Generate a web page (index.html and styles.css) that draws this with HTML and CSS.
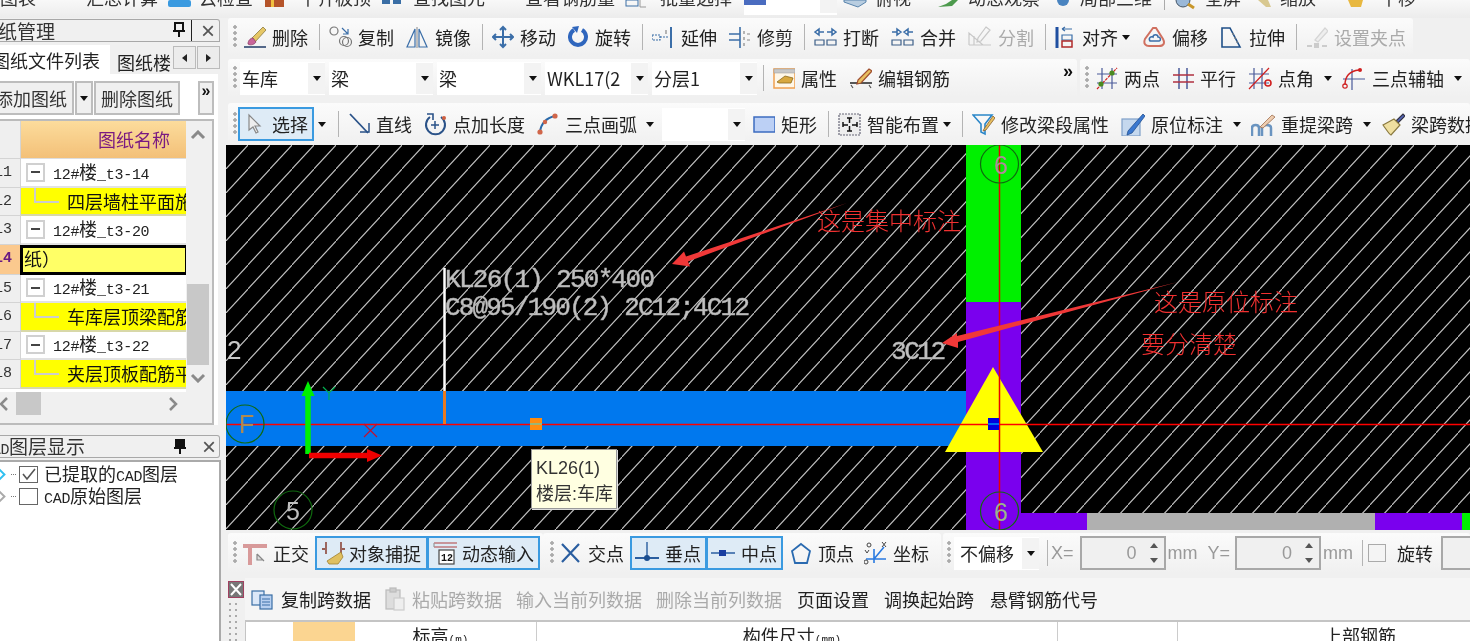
FILE: index.html
```html
<!DOCTYPE html>
<html lang="zh">
<head>
<meta charset="utf-8">
<title>钢筋算量</title>
<link rel="stylesheet" href="styles.css">
</head>
<body>
<div class="app">

<header class="topbar">
  <span class="tt t-a">图表</span>
  <span class="tt t-b">汇总计算</span>
  <svg class="tic t-c" width="24" height="18"><rect x="0" y="0" width="23" height="7" rx="2" fill="#3a9ae0"/></svg>
  <span class="tt t-d">云检查</span>
  <svg class="tic t-e" width="20" height="18"><rect x="0" y="0" width="19" height="7" fill="#b5542a"/><rect x="6" y="0" width="3" height="7" fill="#f0c040"/></svg>
  <span class="tt t-f">平齐板顶</span>
  <svg class="tic t-g" width="20" height="18"><rect x="0" y="0" width="8" height="4" fill="#3a6ea5"/><rect x="11" y="0" width="8" height="4" fill="#3a6ea5"/></svg>
  <span class="tt t-h">查找图元</span>
  <span class="tt t-i">查看钢筋量</span>
  <svg class="tic t-j" width="22" height="18"><rect x="1" y="0" width="12" height="6" fill="none" stroke="#3a6ea5"/><path d="M15 0v7h6" stroke="#999" fill="none"/></svg>
  <span class="tt t-k">批量选择</span>
  <div class="topcombo"><i class="topcombo-fill"></i><i class="topcombo-btn"></i></div>
  <svg class="tic t-l" width="24" height="18"><path d="M1 2l14 5 8-5V0H1z" fill="#b8cde0" stroke="#5a85ad"/></svg>
  <span class="tt t-m">俯视</span>
  <svg class="tic t-n" width="24" height="18"><path d="M2 7l8-3 6-4h6l-6 6z" fill="#4d9a4d"/></svg>
  <span class="tt t-o">动态观察</span>
  <svg class="tic t-p" width="15" height="18"><circle cx="7" cy="0" r="6" fill="#4a84c0"/></svg>
  <span class="tt t-q">局部三维</span>
  <i class="topsep"></i>
  <svg class="tic t-r" width="22" height="18"><circle cx="9" cy="0" r="7" fill="#9ab8d8" stroke="#456"/><path d="M14 4l6 4" stroke="#c8962a" stroke-width="3"/></svg>
  <span class="tt t-s">全屏</span>
  <svg class="tic t-t" width="18" height="18"><path d="M4 0h10l3 7-5 0z" fill="#d8c890"/></svg>
  <span class="tt t-u">缩放</span>
  <svg class="tic t-v" width="20" height="18"><path d="M2 0h15l-2 7H5z" fill="#e8b840"/></svg>
  <span class="tt t-w">平移</span>
</header>

<div class="workspace">

<aside class="side">
  <div class="dock-title">
    <span class="dock-text clip-a">图纸管理</span>
    <span class="pin pin-raised"><svg width="14" height="16" class="pin-ic"><path d="M3 1h8v8H3zM1 9h12M7 9v6" fill="none" stroke="#111" stroke-width="2"/></svg></span>
    <span class="close-x">×</span>
  </div>
  <div class="tabs">
    <span class="tab tab-on"><span class="clip-b">图纸文件列表</span></span>
    <span class="tab tab-off">图纸楼</span>
    <span class="tab-arrow"><i class="tri-l"></i></span>
    <span class="tab-arrow"><i class="tri-r"></i></span>
  </div>
  <div class="sheet">
    <div class="sheet-tools">
      <span class="btn btn-add"><span class="clip-c">添加图纸</span></span>
      <span class="btn btn-drop"><i class="caret"></i></span>
      <span class="btn btn-del">删除图纸</span>
      <span class="btn btn-more">»</span>
    </div>
    <div class="sheet-table">
      <div class="tbl-main">
        <div class="rows">
          <div class="tr tr-head"><span class="gut"></span><span class="name-h">图纸名称</span></div>
          <div class="tr"><span class="gut">11</span><span class="cell"><i class="minus"></i><span class="m">12#<b class="cjk">楼</b>_t3-14</span></span></div>
          <div class="tr"><span class="gut">12</span><span class="cell cell-y"><i class="conn"></i>四层墙柱平面施工图</span></div>
          <div class="tr"><span class="gut">13</span><span class="cell"><i class="minus"></i><span class="m">12#<b class="cjk">楼</b>_t3-20</span></span></div>
          <div class="tr tr-active"><span class="gut gut-on">14</span><span class="cell cell-edit">纸）</span></div>
          <div class="tr"><span class="gut">15</span><span class="cell"><i class="minus"></i><span class="m">12#<b class="cjk">楼</b>_t3-21</span></span></div>
          <div class="tr"><span class="gut">16</span><span class="cell cell-y"><i class="conn"></i>车库层顶梁配筋图</span></div>
          <div class="tr"><span class="gut">17</span><span class="cell"><i class="minus"></i><span class="m">12#<b class="cjk">楼</b>_t3-22</span></span></div>
          <div class="tr"><span class="gut">18</span><span class="cell cell-y"><i class="conn"></i>夹层顶板配筋平面图</span></div>
        </div>
        <div class="vbar">
          <svg width="16" height="10" class="chev-up"><path d="M2 8l6-6 6 6" fill="none" stroke="#8a8a8a" stroke-width="3"/></svg>
          <i class="vthumb"></i>
          <svg width="16" height="10" class="chev-dn"><path d="M2 2l6 6 6-6" fill="none" stroke="#8a8a8a" stroke-width="3"/></svg>
        </div>
      </div>
      <div class="hbar">
        <svg width="8" height="14"><path d="M7 1L1 7l6 6" fill="none" stroke="#8a8a8a" stroke-width="2.5"/></svg>
        <i class="hthumb"></i>
        <svg width="10" height="14" class="chev-r"><path d="M2 1l6 6-6 6" fill="none" stroke="#8a8a8a" stroke-width="2.5"/></svg>
      </div>
    </div>
  </div>

  <div class="dock-title dock-two">
    <span class="dock-text clip-d"><span class="m">CAD</span>图层显示</span>
    <span class="pin"><svg width="14" height="16" class="pin-ic"><path d="M3 1h8v8H3zM1 9h12M7 9v6" fill="#111" stroke="#111" stroke-width="2"/></svg></span>
    <span class="close-x">×</span>
  </div>
  <div class="layers">
    <div class="layer"><i class="dia dia-c"></i><i class="dots"></i><span class="chk"><svg width="15" height="13"><path d="M2 6l4 5 8-10" fill="none" stroke="#555" stroke-width="1.6"/></svg></span><span class="lay-t">已提取的<span class="m">CAD</span>图层</span></div>
    <div class="layer"><i class="dia dia-g"></i><i class="dots"></i><span class="chk"></span><span class="lay-t"><span class="m">CAD</span>原始图层</span></div>
  </div>
</aside>

<main class="main">
  <div class="strip strip-1">
    <i class="grip g1"></i>
    <span class="it"><svg class="ic" width="23" height="24"><path d="M1 22h22" stroke="#1f3a66" stroke-width="1.5"/><path d="M9 13L20 2l3 3-11 12z" fill="#e6c766" stroke="#8a7a40" stroke-width=".8"/><path d="M5 19c0-4 3-6 5-6l3 4c-1 2-5 4-8 2z" fill="#c9659a" stroke="#8a3f68" stroke-width=".8"/></svg>删除</span>
    <i class="sep"></i>
    <span class="it"><svg class="ic" width="23" height="24"><circle cx="5" cy="6" r="4" stroke="#777"/><circle cx="15" cy="16" r="4.5" stroke="#777"/><circle cx="18" cy="17" r="4.5" stroke="#777"/><path d="M13 3l6 6m0-5v5h-5" stroke="#3b6ea8"/></svg>复制</span>
    <span class="it"><svg class="ic" width="23" height="24"><path d="M9 4L1 22h8zM13 4l8 18h-8z"/><path d="M11 2v21" stroke="#999"/></svg>镜像</span>
    <i class="sep"></i>
    <span class="it"><svg class="ic" width="22" height="24"><path d="M11 2v20M1 12h20M8 5l3-3 3 3M8 19l3 3 3-3M4 9l-3 3 3 3M18 9l3 3-3 3" stroke-width="2"/></svg>移动</span>
    <span class="it"><svg class="ic" width="21" height="24"><path d="M6 5a8 8 0 1 0 8 0" stroke="#2f66bd" stroke-width="4"/><path d="M11 1l-7 1 5 6z" fill="#2f66bd" stroke="none"/></svg>旋转</span>
    <i class="sep"></i>
    <span class="it"><svg class="ic" width="23" height="24"><path d="M0 10h8v5H0zM8 12h8" stroke-dasharray="2 1"/><path d="M19 2v21" stroke-width="2"/><path d="M14 5v4" stroke="#888"/></svg>延伸</span>
    <span class="it"><svg class="ic" width="22" height="24"><path d="M0 9h11M0 15h11M11 2v21" stroke-width="1.6"/><path d="M15 6v3M15 12v3M15 18v3M18 9h3M18 15h3" stroke="#888"/></svg>修剪</span>
    <i class="sep"></i>
    <span class="it"><svg class="ic" width="23" height="24"><path d="M1 7l4-3v6zM5 7h5M22 7l-4-3v6zM18 7h-5" stroke-width="1.5"/><path d="M1 15h9v5H1zM13 15h9v5h-9z" stroke="#3d5f88"/></svg>打断</span>
    <span class="it"><svg class="ic" width="23" height="24"><path d="M10 7L6 4v6zM6 7H1M13 7l4-3v6zM17 7h5" stroke-width="1.5"/><path d="M1 15h9v5H1zM13 15h9v5h-9z" stroke="#3d5f88"/></svg>合并</span>
    <span class="it it-off"><svg class="ic" width="24" height="24"><path d="M1 20h22M1 20V8l14 12M6 20V11M18 2l4 3-9 11-4 1 1-4z" stroke="#c8c8c8"/></svg>分割</span>
    <i class="sep"></i>
    <span class="it it-c"><svg class="ic" width="21" height="24"><path d="M2 2v21" stroke="#1f4fa0" stroke-width="3"/><path d="M7 4h10M7 4l3-2M7 4l3 2" stroke="#3b6ea8"/><path d="M7 10h10v5H7z" stroke="#3b6ea8"/><path d="M7 16h10v6H7z" stroke="#b02a2a" stroke-width="1.5"/></svg>对齐<i class="caret caret-t"></i></span>
    <span class="it"><svg class="ic" width="23" height="24"><path d="M10 3L2 14c-2 5 1 7 4 7h10c5 0 6-3 4-7L13 3z" stroke="#d07060" stroke-width="2"/><path d="M7 16c-2-3 1-5 3-4 0-3 5-3 5 0 3 0 3 4 1 4z" stroke="#3b6ea8" stroke-width="1.5"/></svg>偏移</span>
    <span class="it"><svg class="ic" width="23" height="24"><path d="M2 3h8l10 19H2z" stroke="#1f4f88" stroke-width="1.6"/><path d="M13 8v2M15 12v2M17 16v2" stroke="#888"/></svg>拉伸</span>
    <i class="sep"></i>
    <span class="it it-off it-z"><svg class="ic" width="22" height="24"><path d="M1 21h5M16 21h5" stroke="#ccc" stroke-width="2"/><rect x="8" y="18" width="5" height="5" fill="#ccc" stroke="none"/><path d="M9 15L19 3l3 3-10 11z" stroke="#d5d5d5" fill="#eee"/></svg>设置夹点</span>
  </div>

  <div class="row-2">
    <div class="strip strip-2a">
      <i class="grip g2"></i>
      <span class="combo w85">车库<i class="combo-btn"><i class="caret"></i></i></span>
      <span class="combo w104">梁<i class="combo-btn"><i class="caret"></i></i></span>
      <span class="combo w104">梁<i class="combo-btn"><i class="caret"></i></i></span>
      <span class="combo w103">WKL17(2<i class="combo-btn combo-btn-s"><i class="caret"></i></i></span>
      <span class="combo w105">分层1<i class="combo-btn"><i class="caret"></i></i></span>
      <i class="sep sep-b"></i>
      <span class="it"><svg class="ic" width="22" height="24"><rect x="1" y="3" width="21" height="19" fill="#fff7e8" stroke="#f0a050" stroke-width="1.5"/><rect x="1" y="3" width="21" height="4" fill="#c8c8c8" stroke="#999" stroke-width=".5"/><path d="M4 16l8-6 8 2-2 5H6z" fill="#d8a840" stroke="#8a6a20" stroke-width=".8"/></svg>属性</span>
      <span class="it"><svg class="ic" width="23" height="24"><path d="M1 17h22" stroke="#222" stroke-width="1.5"/><path d="M2 19l2 3M20 19l2 3" stroke="#555"/><path d="M9 14L20 3l3 2-11 12-4 1z" fill="#e8c060" stroke="#a05030"/></svg>编辑钢筋</span>
      <span class="more">»</span>
    </div>
    <div class="strip strip-2b">
      <i class="grip g3"></i>
      <span class="it"><svg class="ic" width="22" height="24"><path d="M6 2v21M16 2v21M1 8h20M1 17h20" stroke="#4a5a99"/><path d="M1 23L21 2" stroke="#d02020" stroke-dasharray="3 1"/><circle cx="5" cy="18" r="2.6" fill="#4a8a20" stroke="none"/><circle cx="16" cy="7" r="2.6" fill="#4a8a20" stroke="none"/></svg>两点</span>
      <span class="it"><svg class="ic" width="22" height="24"><path d="M7 2v21M15 2v21" stroke="#4a5a99" stroke-width="1.5"/><path d="M1 9h21M1 16h21" stroke="#b03040" stroke-width="1.5"/></svg>平行</span>
      <span class="it it-c2"><svg class="ic" width="24" height="24"><path d="M6 2v21M14 2v21M1 8h20M1 17h20" stroke="#4a5a99"/><path d="M1 23L21 2" stroke="#d02020"/><circle cx="20" cy="17" r="3" stroke="#d02020" stroke-width="1.6"/></svg>点角<i class="caret"></i></span>
      <span class="it it-c2"><svg class="ic" width="24" height="24"><path d="M10 3v21M1 13h22" stroke="#4a5a99"/><path d="M3 19C3 10 8 5 17 4" stroke="#d02020" stroke-width="1.4"/><circle cx="3" cy="20" r="2.2" stroke="#d02020"/><circle cx="18" cy="4" r="2" fill="#d02020" stroke="none"/></svg>三点辅轴<i class="caret"></i></span>
    </div>
  </div>

  <div class="strip strip-3">
    <i class="grip g4"></i>
    <span class="tog tog-sel"><svg class="ic" width="16" height="24"><path d="M2 3v15l4-3 3 6 2-1-3-6h5z" fill="#eee" stroke="#888"/></svg>选择</span>
    <i class="caret caret-a"></i>
    <i class="sep sep-c"></i>
    <span class="it"><svg class="ic" width="22" height="24"><path d="M2 2l18 19" stroke="#2a5288" stroke-width="1.8"/><path d="M12 20h9v-9" stroke="#2a5288" stroke-width="1.5"/></svg>直线</span>
    <span class="it"><svg class="ic" width="23" height="24"><path d="M6 5a9.5 9.5 0 1 0 11 0" stroke="#2a5288" stroke-width="2"/><path d="M11 9v8M7 13h8" stroke="#2a5288" stroke-width="1.5"/><path d="M3 2h6v6" stroke="#2a5288" stroke-width="1.6"/><circle cx="20" cy="6" r="2" fill="#d06040" stroke="none"/></svg>点加长度</span>
    <span class="it it-c3"><svg class="ic" width="22" height="24"><path d="M3 20C4 12 9 6 18 4" stroke="#2a6aaa" stroke-width="2"/><circle cx="3" cy="20" r="2.6" fill="#d0664a" stroke="none"/><circle cx="8" cy="10" r="2.2" fill="#d0664a" stroke="none"/><circle cx="18" cy="4" r="2.6" fill="#d0664a" stroke="none"/></svg>三点画弧<i class="caret"></i></span>
    <span class="combo w83"><i class="combo-btn"><i class="caret"></i></i></span>
    <span class="it"><svg class="ic" width="22" height="24"><rect x="1" y="5" width="21" height="15" fill="#bcd0f5" stroke="#3d6cc0" stroke-width="1.5"/></svg>矩形</span>
    <i class="sep"></i>
    <span class="it it-t"><svg class="ic" width="23" height="24"><rect x="1" y="2" width="21" height="21" fill="#eee" stroke="#667" stroke-dasharray="2 1"/><path d="M11.500 6v5M9 6h5M11.500 14v5M9 19h5M5 13h5M5 10v5M14 13h5M19 10v5" stroke="#111" stroke-width="1.5"/></svg>智能布置<i class="caret"></i></span>
    <i class="sep"></i>
    <span class="it"><svg class="ic" width="23" height="24"><path d="M1 3h19l-7 9v10l-4-2v-8z" stroke="#2a86c8" stroke-width="1.6"/><path d="M12 17l9-13 2 2-9 12-3 1z" fill="#e8c060" stroke="#886030" stroke-width=".8"/></svg>修改梁段属性</span>
    <span class="it it-c4"><svg class="ic" width="24" height="24"><rect x="1" y="7" width="18" height="17" fill="#c5d8ee" stroke="#7fa0c8"/><path d="M7 19L22 2l2 2-13 17-5 2z" fill="#3a78d0" stroke="#25508f" stroke-width=".8"/></svg>原位标注<i class="caret"></i></span>
    <span class="it it-c4"><svg class="ic" width="24" height="24"><path d="M1 24v-8c0-4 7-4 7 0v8M11 24v-8c0-4 9-4 9 0v8" stroke="#6a94c0" stroke-width="2.5"/><path d="M9 15L21 3l3 2-12 11z" fill="#eecdb0" stroke="#a07050" stroke-width=".8"/></svg>重提梁跨<i class="caret"></i></span>
    <span class="it"><svg class="ic" width="24" height="24"><path d="M15 9L22 2l2 2-7 7z" fill="#5566bb" stroke="#334"/><path d="M2 13l11-6 6 6-9 10c-2-1-5-6-8-10z" fill="#efdfa0" stroke="#8a7a40"/></svg>梁跨数据</span>
  </div>

  <div class="canvas">
    <svg class="draw" viewBox="226 145 1244 385" width="1244" height="385">
      <defs>
        <pattern id="hatch" patternUnits="userSpaceOnUse" x="226" y="145" width="22" height="24">
          <path d="M-2 26L24 -2" stroke="#c4c4c4" stroke-width="1.2" fill="none"/>
        </pattern>
      </defs>
      <rect x="226" y="145" width="1244" height="385" fill="#000"/>
      <rect x="226" y="145" width="1244" height="385" fill="url(#hatch)"/>
      <rect x="226" y="391" width="740" height="55" fill="#0078ee"/>
      <rect x="966" y="145" width="55" height="157" fill="#00f000"/>
      <rect x="966" y="302" width="55" height="228" fill="#7a00ee"/>
      <rect x="1021" y="513" width="66" height="17" fill="#7a00ee"/>
      <rect x="1087" y="513" width="288" height="17" fill="#b0b0b0"/>
      <rect x="1375" y="513" width="87" height="17" fill="#7a00ee"/>
      <rect x="1462" y="513" width="8" height="17" fill="#00f000"/>
      <path d="M993 367L1043 452H945z" fill="#ffff00"/>
      <path d="M226 424.500H1470" stroke="#ff0000" stroke-width="1.5"/>
      <path d="M999.500 145V530" stroke="#e80000" stroke-width="1.5"/>
      <rect x="988" y="418" width="11" height="12" fill="#0000e0"/>
      <path d="M988 424h11" stroke="#00e0ff"/>
      <g fill="none" stroke="#0f6a0f" stroke-width="1.2">
        <circle cx="999.500" cy="164" r="19"/>
        <circle cx="999.500" cy="511" r="19"/>
        <circle cx="245" cy="424" r="19"/>
        <circle cx="293" cy="510" r="19"/>
      </g>
      <text class="cad" x="994" y="174" font-size="25" fill="#b08a9a">6</text>
      <text class="cad" x="994" y="521" font-size="25" fill="#9ab88a">6</text>
      <text class="cad" x="239" y="433" font-size="25" fill="#b08a50">F</text>
      <text class="cad" x="286" y="520" font-size="25" fill="#c0c0c0">5</text>
      <text class="cad" x="227" y="359" font-size="26" fill="#c8c8c8">2</text>
      <text class="cad-m" x="445" y="287" font-size="26" textLength="210" lengthAdjust="spacing">KL26(1) 250*400</text>
      <text class="cad-m" x="445" y="315" font-size="26" textLength="305" lengthAdjust="spacing">C8@95/190(2) 2C12;4C12</text>
      <text class="cad-m" x="891" y="359" font-size="26" textLength="55" lengthAdjust="spacing">3C12</text>
      <path d="M444.500 268V391" stroke="#ffffff" stroke-width="2.5"/>
      <path d="M444.500 391V424" stroke="#e87a20" stroke-width="3"/>
      <rect x="530" y="418" width="12" height="12" fill="#ff8c10"/>
      <path d="M530 424h12" stroke="#30e0e0"/>
      <path d="M308 454V392" stroke="#00f000" stroke-width="5.500"/>
      <path d="M308 381l6.500 15h-13z" fill="#00f000"/>
      <path d="M309 455.500H368" stroke="#f00000" stroke-width="5.500"/>
      <path d="M382 455.500l-15-6.500v13z" fill="#f00000"/>
      <path d="M323 387l6 6 6-6M329 393v7" fill="none" stroke="#00b050" stroke-width="1.2"/>
      <path d="M364 424l13 13M377 424l-13 13" stroke="#c01030" stroke-width="1.2"/>
      <polygon points="672,264 684,251.500 686,256.600 847,203 688,261.400 690,266.500" fill="#f03838"/>
      <polygon points="942,343 957,333 957,336 1178,282 958,342 958,348" fill="#f03838"/>
      <text class="note" x="817" y="230">这是集中标注</text>
      <text class="note" x="1154" y="311">这是原位标注</text>
      <text class="note" x="1141" y="353">要分清楚</text>
    </svg>
    <div class="tip"><div>KL26(1)</div><div>楼层:车库</div></div>
  </div>

  <div class="snap">
    <div class="strip snap-a">
      <i class="grip g5"></i>
      <span class="it it-s"><svg class="ic" width="25" height="24"><path d="M1 5h24M8 5v19" stroke="#d89a9a" stroke-width="4"/><path d="M15 13l7 7M15 13v6h6" stroke="#888" fill="#ddd"/></svg>正交</span>
      <span class="tog tog-a"><svg class="ic" width="24" height="24"><path d="M5 1v12M20 1v12M1 8h3M21 8h3" stroke="#803020" stroke-width="1.4"/><path d="M6 20l14-9 2 5-5 7H8z" fill="#e0c060" stroke="#a08030" stroke-width=".8"/></svg>对象捕捉</span>
      <span class="tog tog-b"><svg class="ic" width="24" height="24"><path d="M1 2h24M1 6h24" stroke="#b04040"/><path d="M1 2v4M25 2v4" stroke="#999"/><rect x="6" y="9" width="15" height="14" fill="#fff" stroke="#444"/><text x="8" y="20" class="ic-num">12</text></svg>动态输入</span>
    </div>
    <div class="strip snap-b">
      <i class="grip g6"></i>
      <span class="it it-s2"><svg class="ic" width="22" height="24"><path d="M2 3l17 18M19 3L2 21" stroke="#2a5ea0" stroke-width="2.2"/></svg>交点</span>
      <span class="tog tog-c"><svg class="ic" width="24" height="24"><path d="M0 17h24" stroke="#2a5ea0" stroke-width="2"/><path d="M12 1v16" stroke="#2a5ea0" stroke-width="1.4"/><circle cx="12" cy="17" r="3" fill="#1a4e90" stroke="none"/></svg>垂点</span>
      <span class="tog tog-c tog-d"><svg class="ic" width="24" height="24"><path d="M0 12h24" stroke="#2a5ea0" stroke-width="1.5"/><rect x="8" y="9" width="7" height="6" fill="#1a3ea0" stroke="none"/></svg>中点</span>
      <span class="it it-s3"><svg class="ic" width="22" height="24"><path d="M11 3l9 7-3 12H5L2 10z" stroke="#2a6ab0" stroke-width="1.8"/></svg>顶点</span>
      <span class="it it-s4"><svg class="ic" width="24" height="24"><path d="M2 18h20M10 8v14M10 18L20 6" stroke="#2a7ae0" stroke-width="1.6"/><circle cx="5" cy="4" r="2" stroke="#444" stroke-width="1"/><circle cx="2" cy="21" r="2" stroke="#444" stroke-width="1"/><path d="M18 1l4 5M22 1l-4 5M1 9l2 3 2-3" stroke="#444" stroke-width="1"/></svg>坐标</span>
    </div>
    <div class="strip snap-c">
      <i class="grip g7"></i>
      <span class="combo w85 combo-sn">不偏移<i class="combo-btn"><i class="caret"></i></i></span>
      <i class="sep sep-d"></i>
      <span class="lbl lbl-x">X=</span>
      <span class="spin">0<span class="spin-btns"><i class="up"></i><i class="dn"></i></span></span>
      <span class="lbl lbl-mm">mm</span>
      <span class="lbl lbl-y">Y=</span>
      <span class="spin">0<span class="spin-btns"><i class="up"></i><i class="dn"></i></span></span>
      <span class="lbl lbl-mm">mm</span>
      <i class="sep sep-e"></i>
      <i class="snap-chk"></i>
      <span class="rot">旋转</span>
      <span class="spin spin-last"></span>
    </div>
  </div>

  <section class="gridpanel">
    <div class="rail">
      <svg width="16" height="17" class="rail-x"><rect x=".5" y=".5" width="15" height="16" fill="#777" stroke="#a04060"/><path d="M3 3l10 11M13 3L3 14" stroke="#fff" stroke-width="2"/></svg>
      <i class="rail-dots"></i>
    </div>
    <div class="grid-body">
      <div class="grid-tools">
        <span class="gt"><svg class="ic" width="24" height="24"><rect x="1" y="4" width="12" height="14" fill="#dce8f8" stroke="#3a6ea5"/><rect x="9" y="8" width="12" height="14" fill="#b8d0f0" stroke="#3a6ea5"/><path d="M11 12h8M11 15h8M11 18h8"/></svg>复制跨数据</span>
        <span class="gt gt-off"><svg class="ic" width="21" height="24"><rect x="1" y="3" width="14" height="19" fill="#ddd" stroke="#bbb"/><rect x="5" y="1" width="6" height="4" fill="#ccc" stroke="#bbb"/><rect x="9" y="11" width="10" height="12" fill="#eee" stroke="#ccc"/></svg>粘贴跨数据</span>
        <span class="gt gt-off">输入当前列数据</span>
        <span class="gt gt-off">删除当前列数据</span>
        <span class="gt">页面设置</span>
        <span class="gt">调换起始跨</span>
        <span class="gt">悬臂钢筋代号</span>
      </div>
      <div class="grid-head">
        <span class="gh gh-1"></span>
        <span class="gh gh-2"></span>
        <span class="gh gh-3">标高<span class="sm">(m)</span></span>
        <span class="gh gh-4">构件尺寸<span class="sm">(mm)</span></span>
        <span class="gh gh-5"></span>
        <span class="gh gh-6">上部钢筋</span>
      </div>
    </div>
  </section>
</main>
</div>
</div>
</body>
</html>
```
FILE: styles.css
```css
* { box-sizing: border-box; }
html, body { margin: 0; padding: 0; height: 100%; overflow: hidden; background: #f0f0f0; }
i { font-style: normal; display: block; }
b { font-weight: 400; }
.app {
  width: 1470px; height: 641px; overflow: hidden; background: #f0f0f0; color: #222;
  font: 18px/1 "Noto Sans CJK SC", "Liberation Sans", sans-serif;
  filter: blur(.35px);
}
svg { display: block; flex: none; }
.ic { fill: none; stroke: #3b6ea8; stroke-width: 1.2; }
.m { font-family: "Liberation Mono", "Noto Sans CJK SC", monospace; font-size: 15px; letter-spacing: -.3px; }
.cjk { font-family: "Noto Sans CJK SC", sans-serif; font-size: 18px; letter-spacing: 0; }

/* cut-off top toolbar */
.topbar {
  height: 18px; display: flex; align-items: flex-start; overflow: hidden;
  background: linear-gradient(#f8f8f8, #ececec); white-space: nowrap; color: #333;
}
.tt { margin-top: -12px; flex: none; }
.tic { margin-top: 0; }
.t-a { margin-right: 50px; }
.t-b { margin-right: 10px; }
.t-c { margin-right: 7px; }
.t-d { margin-right: 12px; }
.t-e { margin-right: 14px; }
.t-f { margin-right: 11px; }
.t-g { margin-right: 11px; }
.t-h { margin-right: 40px; }
.t-i { margin-right: 10px; }
.t-j { margin-right: 13px; }
.t-k { margin-right: 12px; }
.topcombo { width: 93px; height: 15px; background: #fff; display: flex; justify-content: space-between; margin-right: 6px; flex: none; }
.topcombo-fill { width: 22px; height: 5px; margin-left: 0; background: #4a6cc0; }
.topcombo-btn { width: 17px; height: 13px; background: #f3f3f3; }
.t-l { margin-right: 8px; }
.t-m { margin-right: 25px; }
.t-n { margin-right: 8px; }
.t-o { margin-right: 16px; }
.t-p { margin-right: 9px; }
.t-q { margin-right: 12px; }
.topsep { width: 1px; height: 10px; background: #aaa; margin-right: 9px; flex: none; }
.t-r { margin-right: 9px; }
.t-s { margin-right: 13px; }
.t-t { margin-right: 8px; }
.t-u { margin-right: 30px; }
.t-v { margin-right: 14px; }

.workspace { display: grid; grid-template-columns: 226px 1244px; height: 623px; }

/* left dock */
.side { width: 221px; overflow: hidden; background: #f0f0f0; }
.dock-title {
  height: 23px; margin-top: 1px; width: 220px; display: flex; align-items: center;
  border: 1px solid #a8a8a8; border-left: 0; border-radius: 0 3px 0 0; background: #f0f0f0; overflow: hidden;
}
.dock-text { font-size: 19px; white-space: nowrap; flex: none; }
.clip-a { margin-left: -21px; width: 187px; color: #333; }
.clip-d { margin-left: -17px; width: 184px; color: #333; }
.pin { width: 26px; height: 22px; display: flex; align-items: center; justify-content: center; flex: none; }
.pin-raised { border-right: 1px solid #222; border-bottom: 1px solid #222; }
.close-x { width: 24px; margin-left: 4px; text-align: center; font: 24px/22px "Liberation Sans", sans-serif; color: #555; flex: none; }
.tabs { height: 30px; margin-top: 2px; display: flex; align-items: flex-end; gap: 1px; overflow: hidden; width: 220px; }
.tab { flex: none; height: 28px; display: flex; align-items: center; white-space: nowrap; overflow: hidden; }
.tab-on { width: 110px; height: 29px; background: #fff; }
.clip-b { margin-left: -8px; }
.tab-off { margin-left: 6px; width: 55px; height: 25px; color: #222; }
.tab-arrow { flex: none; width: 23px; height: 23px; margin-bottom: 5px; background: #ececec; border: 1px solid #bbb; display: flex; align-items: center; justify-content: center; }
.tri-l { border: 4px solid transparent; border-right: 5px solid #222; border-left: 0; }
.tri-r { border: 4px solid transparent; border-left: 5px solid #222; border-right: 0; }
.sheet { width: 218px; background: #fff; padding-top: 7px; }
.sheet-tools { display: flex; height: 35px; padding-right: 4px; }
.btn { flex: none; height: 34px; background: #f0f0f0; border: 2px solid #bdbdbd; display: flex; align-items: center; justify-content: center; white-space: nowrap; overflow: hidden; color: #333; }
.btn-add { width: 74px; justify-content: flex-start; border-left: 0; }
.clip-c { margin-left: -5px; }
.btn-drop { width: 18px; margin-left: 1px; }
.btn-del { width: 86px; margin-left: 1px; }
.btn-more { width: 16px; margin-left: auto; align-items: flex-start; font: 700 16px/16px "Liberation Sans", sans-serif; color: #111; }
.sheet-table { margin-top: 3px; width: 214px; height: 306px; background: #f0f0f0; border: 2px solid #bbb; border-left: 0; display: flex; flex-direction: column; }
.tbl-main { display: flex; height: 271px; flex: none; }
.rows { width: 186px; flex: none; background: #fff; overflow: hidden; }
.tr { display: flex; height: 28.5px; white-space: nowrap; }
.tr-head { height: 38px; }
.gut { width: 21px; flex: none; display: flex; justify-content: flex-end; background: #efefef; border-bottom: 1px solid #d4d4d4; border-right: 1px solid #d4d4d4; padding-right: 8px; font: 15px/28px "Liberation Mono", monospace; color: #333; overflow: hidden; }
.gut-on { background: #fbc98e; color: #6a1a82; font-weight: 700; }
.name-h { flex: 1; background: linear-gradient(#fcdc9c, #f3c078); color: #7a1a82; text-align: right; padding-right: 16px; line-height: 36px; border-bottom: 1px solid #ddd; }
.cell { position: relative; flex: 1; min-width: 0; overflow: hidden; display: flex; align-items: center; border-bottom: 2px solid #e2e2e2; background: #fff; }
.cell-y { background: #ffff00; padding-left: 46px; color: #111; border-bottom-color: #d8d8a8; }
.minus { width: 19px; height: 19px; margin-left: 5px; margin-right: 8px; flex: none; border: 2px solid #d0d0d0; background: linear-gradient(#444,#444) center / 9px 2px no-repeat #fff; }
.conn { position: absolute; left: 13px; top: 0; width: 25px; height: 15px; border-left: 2px solid #ccc; border-bottom: 2px solid #ccc; }
.tr-active { height: 30px; }
.cell-edit { background: #ffff66; border: 3px solid #000; border-right-width: 1px; margin-left: -1px; padding: 0 0 3px 1px; color: #111; }
.vbar { width: 26px; display: flex; flex-direction: column; background: #f0f0f0; }
.chev-up { margin: 9px 0 0 4px; }
.vthumb { width: 22px; height: 81px; margin: auto 0 0 1px; background: #c8c8c8; }
.chev-dn { margin: 8px 0 9px 4px; }
.hbar { flex: none; width: 186px; height: 23px; display: flex; align-items: center; background: #f0f0f0; }
.hthumb { width: 25px; height: 23px; margin-left: 8px; background: #c8c8c8; }
.chev-r { margin-left: auto; margin-right: 8px; }
.dock-two { margin-top: 10px; border-radius: 0 3px 3px 0; height: 23px; }
.layers { width: 221px; height: 184px; background: #fff; margin-top: 2px; border-top: 2px solid #aaa; border-right: 2px solid #aaa; padding-top: 1px; }
.layer { height: 22px; display: flex; align-items: center; white-space: nowrap; overflow: hidden; }
.dia { width: 9px; height: 9px; margin-left: -5px; transform: rotate(45deg); flex: none; border: 2px solid; background: #fff; }
.dia-c { border-color: #30c0f0; }
.dia-g { border-color: #aaa; }
.dots { width: 5px; height: 1px; margin-left: 7px; flex: none; border-top: 1px dotted #777; }
.chk { width: 19px; height: 17px; margin-left: 3px; flex: none; border: 1.5px solid #666; background: #fff; }
.chk svg { margin: 1px 0 0 1px; }
.lay-t { margin-left: 6px; color: #222; }

/* main column */
.main { overflow: hidden; min-width: 0; padding: 0; }
.strip { display: flex; align-items: center; height: 38px; border-radius: 3px; background: linear-gradient(#fbfbfb, #f0f0f0); white-space: nowrap; flex: none; }
.strip-1 { width: 1185px; margin: 0 0 3px 2px; padding-left: 5px; }
.row-2 { display: flex; margin-left: 2px; gap: 3px; margin-bottom: 6px; }
.strip-2a { width: 849px; padding-left: 5px; }
.strip-2b { width: 390px; padding-left: 5px; }
.strip-3 { height: 42px; margin-left: 2px; padding-left: 5px; overflow: hidden; }
.grip { width: 4px; height: 24px; flex: none; background: radial-gradient(circle at 2px 2px, #aaa 1.5px, transparent 2px) 0 0 / 4px 6px repeat-y; }
.g1 { margin-right: 6px; }
.g2 { margin-right: 3px; }
.g3 { margin-right: 7px; }
.g4 { margin-right: 1px; }
.g5 { margin-right: 5px; }
.g6 { margin-right: 6px; }
.g7 { margin-right: 3px; }
.it { display: flex; align-items: center; gap: 6px; margin-right: 12px; flex: none; }
.it-off { color: #aaa; }
.it-z { margin-right: 0; }
.it-c { margin-right: 13px; }
.it-c .caret { margin-left: -2px; }
.it-c2 { margin-right: 10px; }
.it-c2 .caret { margin-left: 4px; }
.it-c3 { margin-right: 8px; }
.it-c3 .caret { margin-left: 3px; }
.it-c4 { margin-right: 10px; }
.it-c4 .caret { margin-left: 4px; }
.it-t .caret { margin-left: -2px; }
.sep { width: 1px; height: 26px; flex: none; background: #b4b4b4; margin: 0 9px 0 -1px; }
.sep-b { margin: 0 9px 0 2px; }
.sep-c { margin: 0 9px 0 12px; }
.sep-d { margin: 0 3px 0 8px; }
.sep-e { margin: 0 5px 0 -1px; }
.caret { width: 0; height: 0; border: 4.5px solid transparent; border-top: 5px solid #111; border-bottom: 0; flex: none; }
.caret-a { margin-left: 4px; }
.combo { height: 33px; display: flex; align-items: center; justify-content: space-between; background: #fff; padding-left: 2px; margin-right: 4px; flex: none; }
.w85 { width: 85px; }
.w104 { width: 104px; }
.w103 { width: 103px; }
.w105 { width: 105px; }
.w83 { width: 83px; margin-right: 8px; }
.combo-btn { width: 17px; height: 31px; margin-left: auto; background: #f3f3f3; display: flex; align-items: center; justify-content: center; }
.more { margin-left: auto; margin-right: 4px; margin-top: -14px; font: 700 18px/18px "Liberation Sans", sans-serif; color: #111; }
.tog { height: 34px; display: flex; align-items: center; flex: none; background: #deebf6; border: 2px solid #3a9ae0; }
.tog-sel { width: 76px; padding-left: 7px; gap: 9px; }

/* drawing area */
.canvas { position: relative; width: 1244px; height: 385px; overflow: hidden; background: #000; }
.draw { display: block; }
.cad { font-family: "Liberation Sans", sans-serif; }
.cad-m { font-family: "Liberation Mono", monospace; fill: #c0c0c0; stroke: #b0b0b0; stroke-width: .5px; }
.note { font-family: "Noto Sans CJK SC", sans-serif; font-size: 24px; font-weight: 300; fill: #f03030; }
.tip { position: absolute; left: 305px; top: 304px; width: 86px; height: 60px; background: #ffffe1; border: 1px solid #999; padding: 5px 4px; font-size: 18px; line-height: 26px; color: #333; white-space: nowrap; font-family: "Liberation Sans", "Noto Sans CJK SC", sans-serif; box-shadow: 1px 1px 0 #ddd; }

/* snap toolbar */
.snap { height: 48px; display: flex; padding-top: 3px; align-items: flex-start; }
.snap .strip { height: 40px; }
.snap-a { width: 315px; margin-left: 2px; padding-left: 5px; }
.snap-b { width: 398px; margin-left: 0; padding-left: 7px; }
.snap-c { width: 527px; margin-left: 2px; padding-left: 4px; }
.it-s { margin-right: 6px; }
.tog-a, .tog-b { width: 113px; padding-left: 4px; gap: 4px; }
.tog-b { margin-left: -1px; gap: 5px; }
.it-s2 { margin-right: 6px; }
.tog-c { width: 77px; padding-left: 3px; gap: 6px; }
.tog-d { margin-left: -1px; }
.it-s3 { margin: 0 10px 0 7px; }
.it-s4 { gap: 5px; }
.combo-sn { padding-left: 6px; margin-right: 0; }
.lbl { color: #999; font-family: "Liberation Sans", sans-serif; flex: none; }
.lbl-x { margin-right: 6px; }
.lbl-y { margin-right: 5px; }
.lbl-mm { margin: 0 10px 0 2px; }
.spin { width: 86px; height: 34px; flex: none; background: #f0f0f0; border: 2px solid #a8a8a8; display: flex; align-items: center; justify-content: flex-end; color: #999; font-family: "Liberation Sans", sans-serif; }
.spin-btns { width: 20px; height: 30px; margin-left: 7px; display: flex; flex-direction: column; align-items: center; justify-content: space-around; }
.up { width: 0; height: 0; border: 4.5px solid transparent; border-bottom: 5px solid #555; border-top: 0; }
.dn { width: 0; height: 0; border: 4.5px solid transparent; border-top: 5px solid #555; border-bottom: 0; }
.snap-chk { width: 18px; height: 18px; flex: none; border: 1.5px solid #aaa; background: #f4f4f4; }
.rot { margin-left: 11px; margin-right: 8px; flex: none; }
.spin-last { width: 60px; }

/* bottom grid panel */
.gridpanel { display: flex; height: 63px; }
.rail { width: 19px; flex: none; padding: 3px 0 0 2px; }
.rail-dots { width: 12px; height: 40px; margin-top: 4px; background: radial-gradient(circle at 2px 2px, #aaa 1px, transparent 1.500px) 0 0 / 6px 6px; }
.grid-body { flex: 1; min-width: 0; }
.grid-tools { height: 42px; display: flex; align-items: center; padding-left: 6px; white-space: nowrap; background: #f5f5f5; }
.gt { display: flex; align-items: center; gap: 6px; margin-right: 14px; flex: none; }
.gt:nth-child(4), .gt:nth-child(5) { margin-right: 15px; }
.gt:nth-child(6) { margin-right: 16px; }
.gt-off { color: #aaa; }
.grid-head { display: flex; height: 30px; background: #fff; border-top: 2px solid #c4c4c4; border-left: 1px solid #c4c4c4; }
.gh { flex: none; height: 100%; padding-top: 4px; white-space: nowrap; text-align: center; color: #222; }
.gh-1 { width: 47px; }
.gh-2 { width: 62px; height: 19px; background: #fbd591; }
.gh-3 { width: 182px; border-right: 1px solid #ccc; padding-right: 10px; }
.gh-4 { width: 521px; border-right: 1px solid #ccc; padding-right: 10px; }
.gh-5 { width: 120px; border-right: 1px solid #ccc; }
.gh-6 { width: 292px; text-align: left; padding-left: 146px; }
.sm { font-size: 11px; font-family: "Liberation Mono", monospace; }
.ic-num { font: 700 10px "Liberation Mono", monospace; fill: #111; stroke: none; }
```
